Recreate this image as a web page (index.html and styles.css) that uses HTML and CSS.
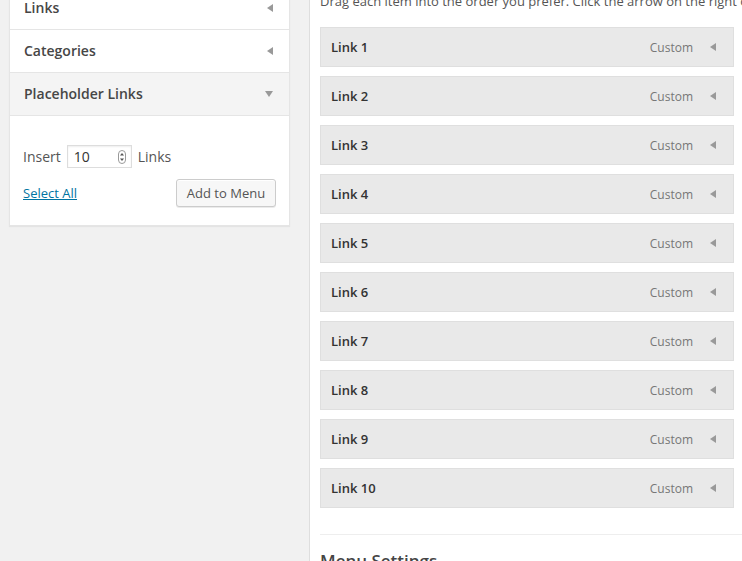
FILE: index.html
```html
<!DOCTYPE html>
<html lang="en">
<head>
<meta charset="utf-8">
<title>Menus</title>
<link rel="stylesheet" href="styles.css">
</head>
<body>
<div class="page">
  <aside class="sidebar">
    <div class="accordion">
      <div class="acc-section">
        <h3 class="acc-title"><span>Links</span><span class="arrow-left"></span></h3>
      </div>
      <div class="acc-section">
        <h3 class="acc-title"><span>Categories</span><span class="arrow-left"></span></h3>
      </div>
      <div class="acc-section open">
        <h3 class="acc-title"><span>Placeholder Links</span><span class="arrow-down"></span></h3>
        <div class="acc-content">
          <div class="insert-row">
            <span>Insert</span>
            <span class="num-input"><span class="num-value">10</span>
              <svg class="spinner" width="8" height="14" viewBox="0 0 8 14" aria-hidden="true">
                <rect x="0.5" y="0.5" width="7" height="13" rx="3.5" fill="#fff" stroke="#9a9a9a"/>
                <path d="M2 5.5 L4 3 L6 5.5 Z" fill="#555"/>
                <path d="M2 8.5 L4 11 L6 8.5 Z" fill="#555"/>
              </svg>
            </span>
            <span>Links</span>
          </div>
          <div class="actions-row">
            <a href="#" class="select-all">Select All</a>
            <button class="button" type="button">Add to Menu</button>
          </div>
        </div>
      </div>
    </div>
  </aside>
  <main class="menu-panel">
    <p class="desc">Drag each item into the order you prefer. Click the arrow on the right of the item to reveal additional configuration options.</p>
    <ul class="menu-list">
      <li class="menu-item"><span class="item-title">Link 1</span><span class="item-type">Custom</span><span class="item-arrow"></span></li>
      <li class="menu-item"><span class="item-title">Link 2</span><span class="item-type">Custom</span><span class="item-arrow"></span></li>
      <li class="menu-item"><span class="item-title">Link 3</span><span class="item-type">Custom</span><span class="item-arrow"></span></li>
      <li class="menu-item"><span class="item-title">Link 4</span><span class="item-type">Custom</span><span class="item-arrow"></span></li>
      <li class="menu-item"><span class="item-title">Link 5</span><span class="item-type">Custom</span><span class="item-arrow"></span></li>
      <li class="menu-item"><span class="item-title">Link 6</span><span class="item-type">Custom</span><span class="item-arrow"></span></li>
      <li class="menu-item"><span class="item-title">Link 7</span><span class="item-type">Custom</span><span class="item-arrow"></span></li>
      <li class="menu-item"><span class="item-title">Link 8</span><span class="item-type">Custom</span><span class="item-arrow"></span></li>
      <li class="menu-item"><span class="item-title">Link 9</span><span class="item-type">Custom</span><span class="item-arrow"></span></li>
      <li class="menu-item"><span class="item-title">Link 10</span><span class="item-type">Custom</span><span class="item-arrow"></span></li>
    </ul>
    <div class="settings">
      <h3 class="settings-title">Menu Settings</h3>
    </div>
  </main>
</div>
</body>
</html>
```

FILE: styles.css
```css
html, body {
  margin: 0;
  padding: 0;
  height: 561px;
  overflow: hidden;
  background: #f1f1f1;
}

body {
  font-family: "Open Sans", "Liberation Sans", sans-serif;
  font-size: 13px;
  color: #444;
}

.page {
  display: flex;
  align-items: flex-start;
  margin-top: -14px;
}

/* Sidebar */
.sidebar {
  flex: none;
  width: 281px;
  margin-left: 9px;
  margin-right: 19px;
}

.accordion {
  background: #fff;
  border: 1px solid #e5e5e5;
  box-shadow: 0 1px 1px rgba(0, 0, 0, 0.05);
}

.acc-title {
  margin: 0;
  height: 42px;
  display: flex;
  align-items: center;
  justify-content: space-between;
  padding: 0 16px 1px 14px;
  box-sizing: border-box;
  height: 43px;
  border-bottom: 1px solid #e5e5e5;
  font-size: 14px;
  font-weight: 600;
  color: #464646;
}

.open .acc-title {
  background: #f4f4f4;
}

.arrow-left {
  width: 0;
  height: 0;
  border-top: 4px solid transparent;
  border-bottom: 4px solid transparent;
  border-right: 6px solid #999;
}

.arrow-down {
  width: 0;
  height: 0;
  border-left: 4px solid transparent;
  border-right: 4px solid transparent;
  border-top: 6px solid #999;
}

.acc-content {
  padding: 29px 13px 18px;
}

.insert-row {
  display: flex;
  align-items: center;
  gap: 6px;
  height: 23px;
  font-size: 14px;
  color: #555;
}

.num-input {
  box-sizing: border-box;
  width: 65px;
  height: 23px;
  display: flex;
  align-items: center;
  justify-content: space-between;
  padding: 0 5px 0 6px;
  border: 1px solid #ddd;
  box-shadow: inset 0 1px 2px rgba(0, 0, 0, 0.07);
  background: #fff;
  color: #333;
}

.spinner {
  display: block;
}

.actions-row {
  margin-top: 11px;
  display: flex;
  align-items: center;
  justify-content: space-between;
}

.select-all {
  color: #0074a2;
  text-decoration: underline;
  font-size: 13px;
}

.button {
  box-sizing: border-box;
  width: 100px;
  height: 28px;
  padding: 0;
  font-family: inherit;
  font-size: 13px;
  color: #555;
  background: #f7f7f7;
  border: 1px solid #ccc;
  border-radius: 3px;
  box-shadow: inset 0 1px 0 #fff, 0 1px 0 rgba(0, 0, 0, 0.08);
}

/* Menu panel */
.menu-panel {
  flex: 1;
  min-width: 0;
  min-height: 620px;
  background: #fff;
  border-left: 1px solid #dedede;
  padding: 6px 0 0 10px;
}

.desc {
  margin: 0 0 16px;
  line-height: 19px;
  white-space: nowrap;
  color: #555;
}

.menu-list {
  list-style: none;
  margin: 0;
  padding: 0;
  width: 414px;
}

.menu-item {
  box-sizing: border-box;
  height: 40px;
  margin-bottom: 9px;
  display: flex;
  align-items: center;
  padding-left: 10px;
  background: #e9e9e9;
  border: 1px solid #dfdfdf;
}

.menu-item:last-child {
  margin-bottom: 0;
}

.item-title {
  flex: 1;
  font-weight: 600;
  color: #333;
}

.item-type {
  font-size: 12px;
  color: #777;
  margin-right: 17px;
}

.item-arrow {
  width: 0;
  height: 0;
  border-top: 4px solid transparent;
  border-bottom: 4px solid transparent;
  border-right: 6px solid #999;
  margin-right: 17px;
}

.settings {
  margin-top: 26px;
  border-top: 1px solid #eee;
  padding-top: 14px;
}

.settings-title {
  margin: 0;
  font-size: 17px;
  line-height: 24px;
  font-weight: 600;
  color: #444;
}
```
